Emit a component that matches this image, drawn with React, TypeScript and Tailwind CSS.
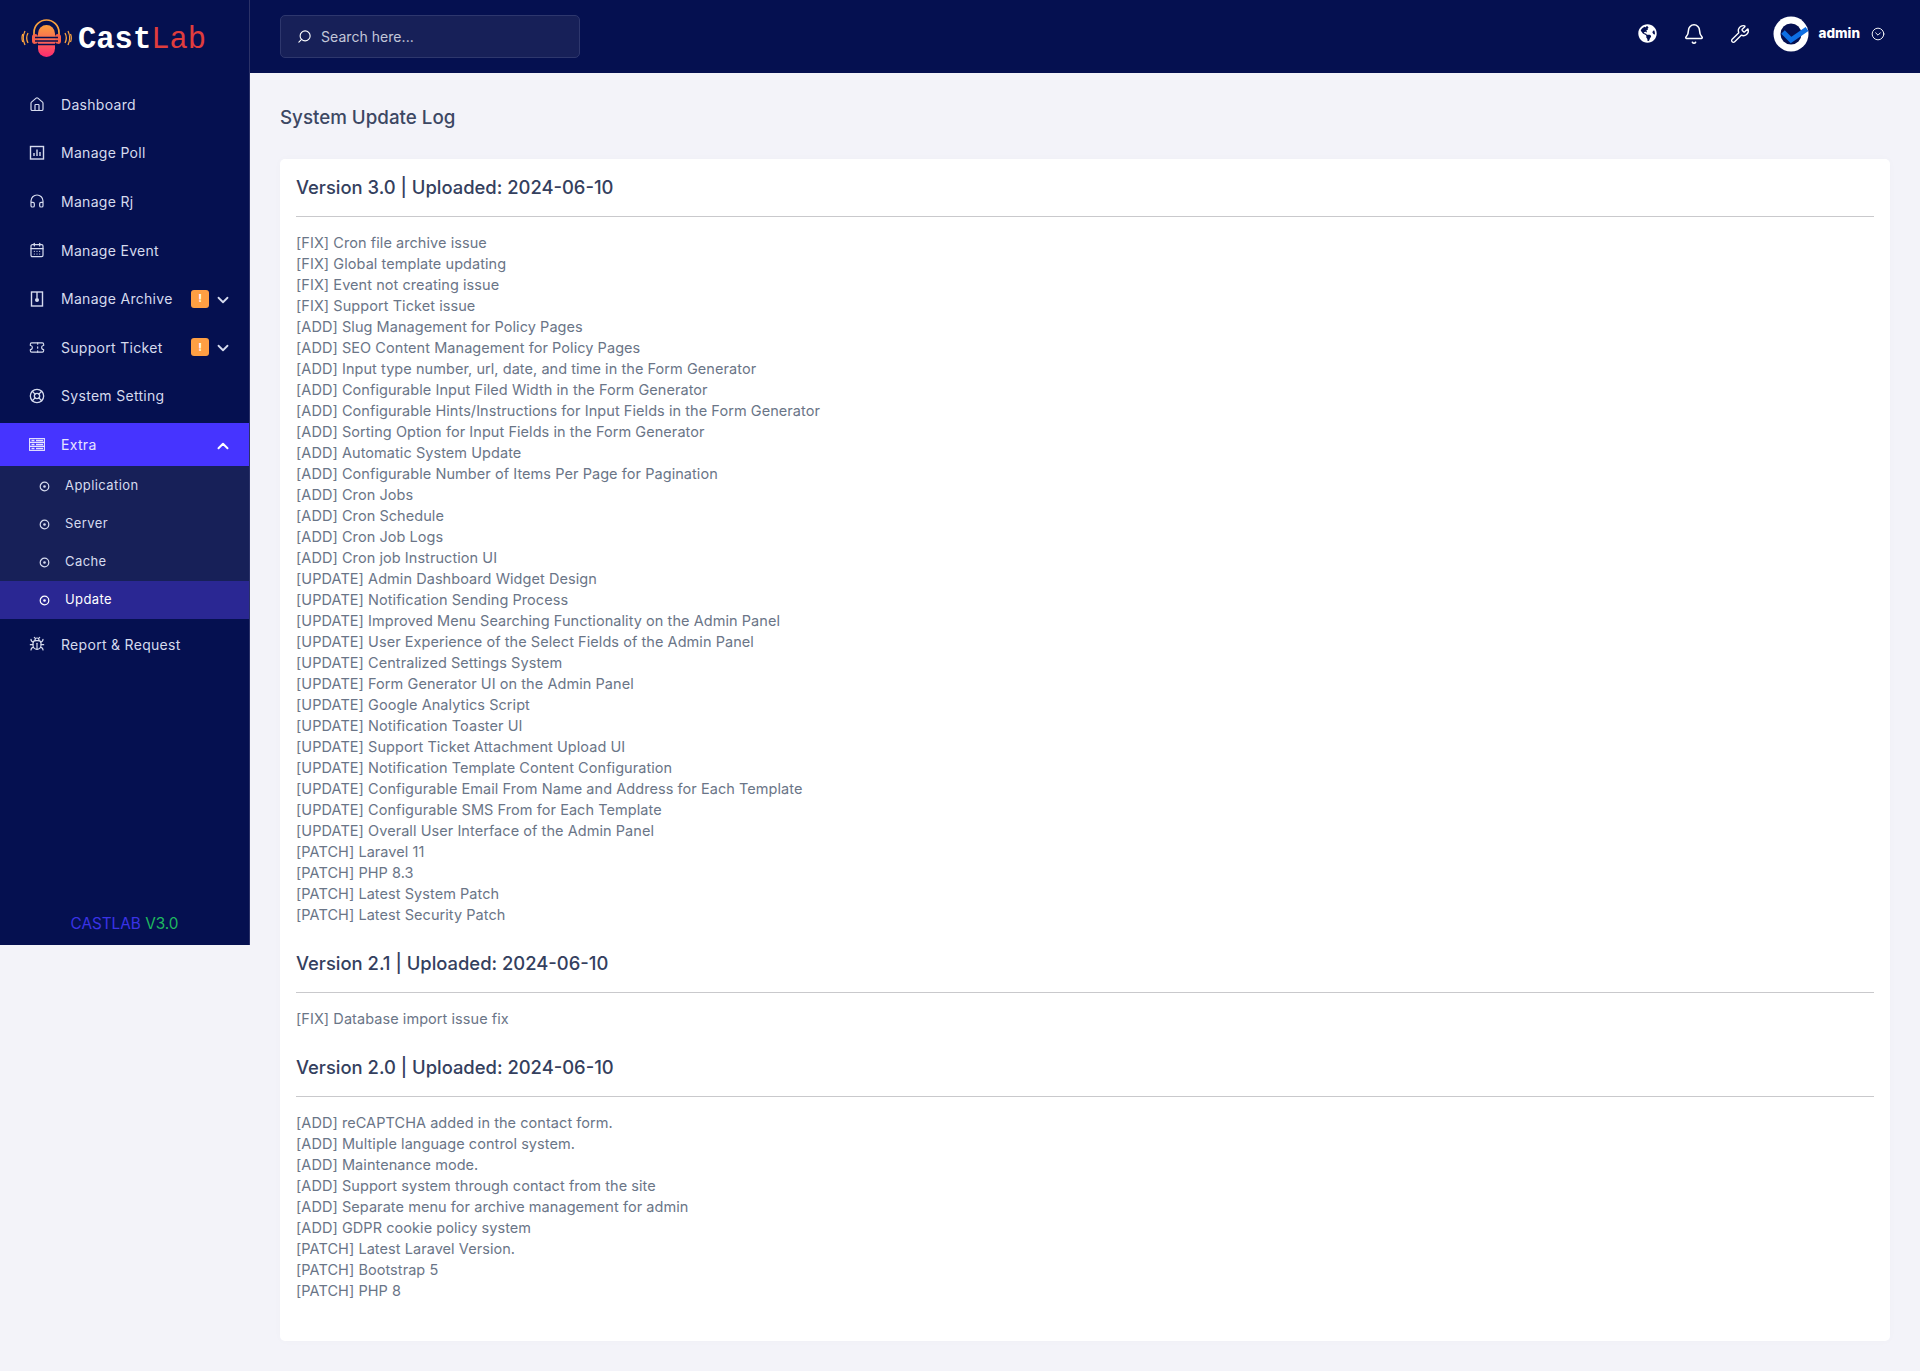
import React from 'react';
import { Home, Headphones, CalendarDays, Ticket, LifeBuoy, Bug, ChevronDown, ChevronUp, Bell, Wrench, Search, CircleChevronDown } from 'lucide-react';
import { FaGlobeAmericas } from 'react-icons/fa';

const v3 = `[FIX] Cron file archive issue
[FIX] Global template updating
[FIX] Event not creating issue
[FIX] Support Ticket issue
[ADD] Slug Management for Policy Pages
[ADD] SEO Content Management for Policy Pages
[ADD] Input type number, url, date, and time in the Form Generator
[ADD] Configurable Input Filed Width in the Form Generator
[ADD] Configurable Hints/Instructions for Input Fields in the Form Generator
[ADD] Sorting Option for Input Fields in the Form Generator
[ADD] Automatic System Update
[ADD] Configurable Number of Items Per Page for Pagination
[ADD] Cron Jobs
[ADD] Cron Schedule
[ADD] Cron Job Logs
[ADD] Cron job Instruction UI
[UPDATE] Admin Dashboard Widget Design
[UPDATE] Notification Sending Process
[UPDATE] Improved Menu Searching Functionality on the Admin Panel
[UPDATE] User Experience of the Select Fields of the Admin Panel
[UPDATE] Centralized Settings System
[UPDATE] Form Generator UI on the Admin Panel
[UPDATE] Google Analytics Script
[UPDATE] Notification Toaster UI
[UPDATE] Support Ticket Attachment Upload UI
[UPDATE] Notification Template Content Configuration
[UPDATE] Configurable Email From Name and Address for Each Template
[UPDATE] Configurable SMS From for Each Template
[UPDATE] Overall User Interface of the Admin Panel
[PATCH] Laravel 11
[PATCH] PHP 8.3
[PATCH] Latest System Patch
[PATCH] Latest Security Patch`.split('\n');
const v2 = `[ADD] reCAPTCHA added in the contact form.
[ADD] Multiple language control system.
[ADD] Maintenance mode.
[ADD] Support system through contact from the site
[ADD] Separate menu for archive management for admin
[ADD] GDPR cookie policy system
[PATCH] Latest Laravel Version.
[PATCH] Bootstrap 5
[PATCH] PHP 8`.split('\n');

const F = "font-['Inter','Noto_Sans',sans-serif]";

function PollIcon() {
  return <svg width="16" height="16" viewBox="0 0 16 16" fill="none" stroke="currentColor" strokeWidth="1.4"><rect x="1.5" y="1.5" width="13" height="12.5" /><path d="M5 11V8M8 11V4.5M11 11V7" /></svg>;
}
function ArchiveIcon() {
  return <svg width="16" height="16" viewBox="0 0 16 16" fill="none" stroke="currentColor" strokeWidth="1.4"><rect x="2.5" y="1" width="11" height="14" /><path d="M8 1v6" /><circle cx="8" cy="9" r="1.3" fill="currentColor" /></svg>;
}
function ExtraIcon() {
  return <svg width="16" height="13" viewBox="0 0 16 13" fill="none" stroke="currentColor" strokeWidth="1.1"><rect x="0.6" y="0.6" width="14.8" height="11.8" /><path d="M0.6 4.4H15.4M0.6 8.4H15.4" /><path d="M2.5 2.5h3M2.5 6.5h3M2.5 10.5h3M7 2.5h7M7 6.5h7M7 10.5h7" strokeWidth="1.4" /></svg>;
}
function Dot() {
  return <svg width="11" height="11" viewBox="0 0 11 11" className="shrink-0" fill="none" stroke="currentColor"><circle cx="5.5" cy="5.5" r="4.3" strokeWidth="1.2" /><circle cx="5.5" cy="5.5" r="1.3" fill="currentColor" stroke="none" /></svg>;
}

function Logo() {
  return (
    <div className="flex items-center h-[73px] pl-[21px] pt-[5px]">
      <svg width="52" height="40" viewBox="0 0 52 40" className="shrink-0">
        <defs>
          <linearGradient id="lg" x1="0" y1="0" x2="0" y2="1"><stop offset="0" stopColor="#fba03c" /><stop offset="1" stopColor="#fb2a70" /></linearGradient>
        </defs>
        <path d="M13 17V13.5a12.5 12.5 0 0 1 25 0V17" fill="none" stroke="#f9a13e" strokeWidth="1.7" />
        <rect x="11" y="15" width="6" height="10" rx="3" fill="#f6614b" />
        <rect x="34" y="15" width="6" height="10" rx="3" fill="#f6614b" />
        <rect x="17" y="6" width="17" height="32" rx="8.5" fill="url(#lg)" />
        <path d="M14 18.5h23M14 22h23M14 25.5h23" stroke="#051050" strokeWidth="1.3" fill="none" />
        <path d="M7 14c-1.6 3-1.6 7 0 10M4 12c-2 4-2 10 0 14M1.8 15c-1 2.5-1 5.5 0 8M44 14c1.6 3 1.6 7 0 10M47 12c2 4 2 10 0 14M49.5 15c1 2.5 1 5.5 0 8" stroke="#f9a13e" strokeWidth="1.3" fill="none" />
      </svg>
      <div className="ml-[5px] mt-[3px] text-[30.5px] leading-none font-['Liberation_Mono',monospace]"><span className="font-bold text-white">Cast</span><span className="text-[#e03d3d]">Lab</span></div>
    </div>
  );
}

function Item({ icon, label, badge, chevron }: { icon: React.ReactNode; label: string; badge?: boolean; chevron?: boolean }) {
  return (
    <div className="h-[48.6px] flex items-center pl-[29px] pr-[17px] text-[#d6dbee]">
      <span className="w-[16px] flex justify-center shrink-0">{icon}</span>
      <span className="ml-[16px] text-[14px] tracking-[0.3px] whitespace-nowrap flex-1">{label}</span>
      {badge && <span className="w-[18px] h-[18px] rounded-[3px] bg-[#ff9f43] text-white text-[11px] font-bold flex items-center justify-center mr-[5px]">!</span>}
      {chevron && <ChevronDown size={18} strokeWidth={2.4} className="mt-[2px]" />}
    </div>
  );
}

function Sub({ label, active }: { label: string; active?: boolean }) {
  return (
    <div className={`h-[38px] flex items-center pl-[39px] text-[13px] tracking-[0.42px] ${active ? 'bg-[#2a2793] text-white' : 'text-[#d6dbee]'}`}>
      <Dot />
      <span className="ml-[15px]">{label}</span>
    </div>
  );
}

function Block({ title, lines, cls }: { title: string; lines: string[]; cls?: string }) {
  return (
    <section className={cls}>
      <h3 className="text-[18.4px] leading-[28px] font-medium text-[#34405e] pb-[15px] border-b border-[#c9c9cc]">{title}</h3>
      <div className="mt-[15px] text-[14.5px] tracking-[0.06px] leading-[21px] text-[#6a7587]">
        {lines.map((l, i) => <div key={i}>{l}</div>)}
      </div>
    </section>
  );
}

export default function App() {
  return (
    <div className={`flex items-start w-[1920px] h-[1371px] bg-[#f3f3f9] overflow-hidden ${F}`}>
      <aside className="w-[250px] h-[945px] bg-[#051050] border-r border-[#2b3268] shrink-0 flex flex-col">
        <Logo />
        <nav className="pt-[7px] flex-1">
          <Item icon={<Home size={17} strokeWidth={1.8} />} label="Dashboard" />
          <Item icon={<PollIcon />} label="Manage Poll" />
          <Item icon={<Headphones size={16} strokeWidth={1.8} />} label="Manage Rj" />
          <Item icon={<CalendarDays size={16} strokeWidth={1.8} />} label="Manage Event" />
          <Item icon={<ArchiveIcon />} label="Manage Archive" badge chevron />
          <Item icon={<Ticket size={17} strokeWidth={1.7} />} label="Support Ticket" badge chevron />
          <Item icon={<LifeBuoy size={16} strokeWidth={2} />} label="System Setting" />
          <div className="h-[43px] mt-[3px] bg-[#4634ff] flex items-center pl-[29px] pr-[17px] text-[#e6e4ff]">
            <span className="w-[16px] flex justify-center"><ExtraIcon /></span>
            <span className="ml-[16px] text-[14px] tracking-[0.3px] flex-1">Extra</span>
            <ChevronUp size={18} strokeWidth={2.6} className="text-white mt-[2px]" />
          </div>
          <div className="bg-[#172058] pt-[1px]">
            <Sub label="Application" />
            <Sub label="Server" />
            <Sub label="Cache" />
            <Sub label="Update" active />
          </div>
          <div className="h-[1px]" />
          <Item icon={<Bug size={16} strokeWidth={1.8} />} label="Report & Request" />
        </nav>
        <div className="pb-[9px] text-center text-[15.3px] leading-[24px]"><span className="text-[#3a33e6]">CASTLAB</span> <span className="text-[#1fb95f]">V3.0</span></div>
      </aside>
      <div className="flex-1 min-w-0">
        <header className="h-[73px] bg-[#051050] flex items-center pl-[30px] pr-[30px]">
          <div className="w-[300px] h-[43px] bg-[#172058] border border-[#2e376d] rounded-[5px] flex items-center pl-[16px]">
            <Search size={15} strokeWidth={1.8} className="-scale-x-100 text-white" />
            <span className="ml-[9px] text-[14px] tracking-[0.05px] text-[#c3c7d8]">Search here...</span>
          </div>
          <div className="ml-auto flex items-center text-white pb-[6px]">
            <FaGlobeAmericas size={19} />
            <Bell size={22} strokeWidth={1.7} className="ml-[26px]" />
            <Wrench size={20} strokeWidth={1.6} className="ml-[25px]" />
            <svg width="36" height="36" viewBox="0 0 36 36" className="ml-[23px]">
              <circle cx="18" cy="18" r="17.5" fill="#fff" />
              <circle cx="18" cy="18" r="10.5" fill="#051050" />
              <path d="M10 16l8 8 16-11" fill="none" stroke="#0e6fe3" strokeWidth="5" />
            </svg>
            <span className="ml-[10px] text-[13.5px] font-extrabold">admin</span>
            <CircleChevronDown size={14} strokeWidth={1.6} className="ml-[11px] mr-[5px]" />
          </div>
        </header>
        <main className="pl-[30px] pr-[30px]">
          <h2 className="h-[86px] pt-[4px] flex items-center text-[18.75px] font-medium text-[#3c4763]">System Update Log</h2>
          <div className="bg-white rounded-[5px] h-[1182px] px-[16px] pt-[14px] shadow-[0_0_10px_rgba(0,0,0,0.02)]">
            <Block title="Version 3.0 | Uploaded: 2024-06-10" lines={v3} />
            <Block title="Version 2.1 | Uploaded: 2024-06-10" lines={["[FIX] Database import issue fix"]} cls="mt-[24px]" />
            <Block title="Version 2.0 | Uploaded: 2024-06-10" lines={v2} cls="mt-[24px]" />
          </div>
        </main>
      </div>
    </div>
  );
}
